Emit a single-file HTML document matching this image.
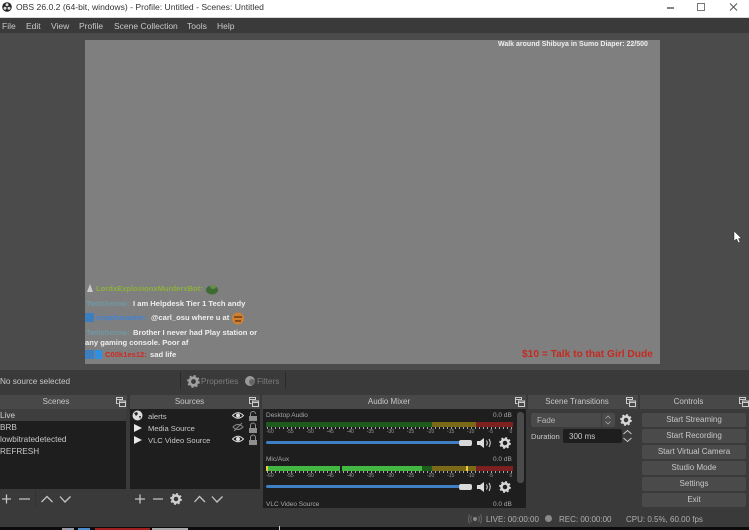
<!DOCTYPE html>
<html><head><meta charset="utf-8"><style>
html,body{margin:0;padding:0;background:#3a3a3a}
#r{position:relative;width:749px;height:530px;overflow:hidden;background:#3a3a3a;font-family:"Liberation Sans",sans-serif;font-size:8.5px;color:#d0d0d0;filter:blur(.35px)}
#r div,#r svg{position:absolute}
.t{white-space:nowrap}
.hd{background:#484848;height:14px;top:395px}
.hdt{top:397px;color:#c8c8c8;font-size:8px;text-align:center}
.lst{background:#1e1e1e;top:409px}
.b{left:642px;width:104px;height:14px;background:#4a4a4a;border-radius:2px;text-align:center;line-height:14px;font-size:8px;color:#c8c8c8;white-space:nowrap}
.g{font-weight:bold;color:#eee;font-size:7.6px;white-space:nowrap}
.db{font-size:6.5px;color:#a8a8a8;white-space:nowrap}
.sc{display:flex;justify-content:space-between;left:260px;width:261px;font-size:5px;color:#999;white-space:nowrap}
.sc span{display:block;width:20px;text-align:center}
.tk{left:267px;width:246px;height:2px;background:repeating-linear-gradient(90deg,#aaa 0 1px,transparent 1px 4px)}
</style></head><body><div id="r">

<div style="left:0;top:0;width:749px;height:18px;background:#fff"></div>
<div style="left:0;top:17px;width:749px;height:1px;background:#d8d8d8"></div>
<svg style="left:2px;top:2px" width="10" height="10" viewBox="0 0 10 10"><circle cx="5" cy="5" r="4.8" fill="#222"/><circle cx="5" cy="2.800" r="1.500" fill="#ddd"/><circle cx="3" cy="6.200" r="1.500" fill="#ddd"/><circle cx="7" cy="6.200" r="1.500" fill="#ddd"/></svg>
<div class="t" style="left:16px;top:2px;color:#333;font-size:8.6px">OBS 26.0.2 (64-bit, windows) - Profile: Untitled - Scenes: Untitled</div>
<svg style="left:665px;top:2px" width="78" height="12" viewBox="0 0 78 12"><path d="M2 6H9" stroke="#333" stroke-width="1.200"/><rect x="32.500" y="1.500" width="7" height="7" fill="none" stroke="#777"/><path d="M65 1.500L72 8.500M72 1.500L65 8.500" stroke="#555" stroke-width="1"/></svg>

<div style="left:0;top:18px;width:749px;height:15px;background:#3a3a3a"></div>
<div class="t" style="left:2px;top:21px;font-size:8.500px;color:#c8c8c8">File</div>
<div class="t" style="left:26px;top:21px;font-size:8.500px;color:#c8c8c8">Edit</div>
<div class="t" style="left:51px;top:21px;font-size:8.500px;color:#c8c8c8">View</div>
<div class="t" style="left:79px;top:21px;font-size:8.500px;color:#c8c8c8">Profile</div>
<div class="t" style="left:114px;top:21px;font-size:8.500px;color:#c8c8c8">Scene Collection</div>
<div class="t" style="left:187px;top:21px;font-size:8.500px;color:#c8c8c8">Tools</div>
<div class="t" style="left:217px;top:21px;font-size:8.500px;color:#c8c8c8">Help</div>

<div style="left:0;top:33px;width:749px;height:337px;background:#4b4b4b"></div>
<div style="left:85px;top:40px;width:575px;height:324px;background:#7f7f7f"></div>
<div class="g" style="left:498px;top:41px;font-size:7px">Walk around Shibuya in Sumo Diaper: 22/500</div>

<svg style="left:86px;top:284px" width="8" height="9" viewBox="0 0 8 9"><path d="M4 0L7 8H1Z" fill="#ccc"/></svg>
<div class="g" style="left:96px;top:284px;color:#8fb03c">LordxExplosionxMurderxBot:</div>
<svg style="left:205px;top:284px" width="14" height="11" viewBox="0 0 14 11"><ellipse cx="7" cy="6" rx="6" ry="4.500" fill="#3f6b33"/><ellipse cx="8" cy="3" rx="3" ry="2" fill="#5f8f4a"/></svg>
<div class="g" style="left:86px;top:299px;color:#6f9aa5">Twitchcrow:</div>
<div class="g" style="left:133px;top:299px">I am Helpdesk Tier 1 Tech andy</div>
<div style="left:85px;top:313px;width:9px;height:9px;background:#3c7fc0"></div>
<div class="g" style="left:96px;top:313px;color:#3f83d6">cripcharacter:</div>
<div class="g" style="left:151px;top:313px">@carl_osu where u at</div>
<svg style="left:231px;top:312px" width="14" height="13" viewBox="0 0 14 13"><circle cx="7" cy="6.500" r="6" fill="#d08030"/><path d="M3 5h8M4 9h6" stroke="#5a3010" stroke-width="1.200"/></svg>
<div class="g" style="left:86px;top:328px;color:#6f9aa5">Twitchcrow:</div>
<div class="g" style="left:133px;top:328px">Brother I never had Play station or</div>
<div class="g" style="left:85px;top:338px">any gaming console. Poor af</div>
<div style="left:85px;top:350px;width:9px;height:9px;background:#3c7fc0"></div>
<div style="left:95px;top:350px;width:7px;height:9px;background:#2f8fe0"></div>
<div class="g" style="left:105px;top:350px;color:#d02a24">C00k1es12:</div>
<div class="g" style="left:150px;top:350px">sad life</div>
<div class="t" style="left:522px;top:349px;color:#c42a20;font-weight:bold;font-size:10.200px">$10 = Talk to that Girl Dude</div>

<svg style="left:733px;top:230px" width="10" height="14" viewBox="0 0 10 14"><path d="M1 1V11L3.500 9L5.500 13L7 12L5.500 8.500H8.500Z" fill="#fff" stroke="#222" stroke-width=".5"/></svg>

<div class="t" style="left:0;top:377px;font-size:8.200px;color:#c8c8c8">No source selected</div>
<div style="left:180px;top:372px;width:1px;height:17px;background:#2a2a2a"></div>
<div style="left:285px;top:372px;width:1px;height:17px;background:#2a2a2a"></div>
<svg style="left:187px;top:375px" width="13" height="13" viewBox="0 0 24 24"><circle cx="12" cy="12" r="7" fill="none" stroke="#a0a0a0" stroke-width="5"/><circle cx="12" cy="12" r="10" fill="none" stroke="#a0a0a0" stroke-width="3.500" stroke-dasharray="3.900 3.950"/></svg>
<div class="t" style="left:201px;top:377px;color:#7d7d7d;font-size:8.200px">Properties</div>
<svg style="left:244px;top:375px" width="12" height="12" viewBox="0 0 12 12"><circle cx="6" cy="6" r="5" fill="#999"/><circle cx="8" cy="7" r="3" fill="#666"/></svg>
<div class="t" style="left:257px;top:377px;color:#7d7d7d;font-size:8.200px">Filters</div>

<!-- scenes -->
<div class="hd" style="left:0;width:127px"></div>
<div class="t hdt" style="left:0;width:112px">Scenes</div>
<svg style="left:116px;top:397px" width="10" height="10" viewBox="0 0 10 10"><path d="M.5.5h6v2h-6zM.5 2.500v4h2M3.500 4h6v5.500h-6zM3.500 5.500h6" fill="none" stroke="#ccc"/></svg>
<div class="lst" style="left:0;width:126px;height:80px"></div>
<div style="left:0;top:409px;width:126px;height:12px;background:#3e3e3e"></div>
<div class="t" style="left:0;top:411px;color:#d0d0d0;font-size:8.200px">Live</div>
<div class="t" style="left:0;top:423px;color:#c8c8c8;font-size:8.200px">BRB</div>
<div class="t" style="left:0;top:435px;color:#c8c8c8;font-size:8.200px">lowbitratedetected</div>
<div class="t" style="left:0;top:447px;color:#c8c8c8;font-size:8.200px">REFRESH</div>
<svg style="left:0;top:492px" width="75" height="14" viewBox="0 0 75 14"><path d="M2 7H11M6.500 2.500V11.500M19 7H30M41.500 10L47 4.500L52.500 10M60 4.500L65 10L70.500 4.500" fill="none" stroke="#c4c4c4" stroke-width="1.300"/></svg>
<div style="left:35px;top:490px;width:1px;height:18px;background:#333"></div>

<!-- sources -->
<div class="hd" style="left:130px;width:130px"></div>
<div class="t hdt" style="left:130px;width:119px">Sources</div>
<svg style="left:249px;top:397px" width="10" height="10" viewBox="0 0 10 10"><path d="M.5.5h6v2h-6zM.5 2.500v4h2M3.500 4h6v5.500h-6zM3.500 5.500h6" fill="none" stroke="#ccc"/></svg>
<div class="lst" style="left:130px;width:130px;height:80px"></div>
<svg style="left:132px;top:410px" width="11" height="11" viewBox="0 0 11 11"><circle cx="5.500" cy="5.500" r="5" fill="#ddd"/><path d="M2 3l3-1 1 2-2 2zM7 6l2 0-1 3z" fill="#222"/></svg>
<svg style="left:133px;top:423px" width="10" height="10" viewBox="0 0 10 10"><path d="M1 1L9 5L1 9Z" fill="#e8e8e8"/></svg>
<svg style="left:133px;top:435px" width="10" height="10" viewBox="0 0 10 10"><path d="M1 1L9 5L1 9Z" fill="#e8e8e8"/></svg>
<div class="t" style="left:148px;top:412px;font-size:7.600px;color:#c8c8c8">alerts</div>
<div class="t" style="left:148px;top:424px;font-size:7.600px;color:#c8c8c8">Media Source</div>
<div class="t" style="left:148px;top:436px;font-size:7.600px;color:#c8c8c8">VLC Video Source</div>
<svg style="left:231px;top:410px" width="30" height="36" viewBox="0 0 30 36"><path d="M1.500 5.500Q7 0 12.500 5.500Q7 11 1.500 5.500Z" fill="none" stroke="#ddd"/><circle cx="7" cy="5.500" r="2" fill="#ddd"/><path d="M2 17Q7 12 12 17Q7 22 2 17ZM3 21L11 13" fill="none" stroke="#8a8a8a"/><path d="M1.500 29Q7 23.500 12.500 29Q7 34.500 1.500 29Z" fill="none" stroke="#ddd"/><circle cx="7" cy="29" r="2" fill="#ddd"/><g fill="none" stroke="#8f8f8f"><path d="M19.500 6V4a2.500 2.500 0 0 1 5 0"/><path d="M19.500 18v-2.500a2.500 2.500 0 0 1 5 0V18"/><path d="M19.500 30v-2.500a2.500 2.500 0 0 1 5 0V30"/></g><g fill="#8f8f8f"><rect x="18" y="6" width="8" height="5"/><rect x="18" y="18" width="8" height="5"/><rect x="18" y="30" width="8" height="5"/></g></svg>
<svg style="left:134px;top:492px" width="95" height="14" viewBox="0 0 95 14"><path d="M1 7H11M6 2.500V11.500M19 7H29M60.500 10L65.500 4.500L71 10M78 4.500L83 10L88.500 4.500" fill="none" stroke="#c4c4c4" stroke-width="1.300"/></svg>
<svg style="left:170px;top:493px" width="12" height="12" viewBox="0 0 24 24"><circle cx="12" cy="12" r="7" fill="none" stroke="#d0d0d0" stroke-width="5"/><circle cx="12" cy="12" r="10" fill="none" stroke="#d0d0d0" stroke-width="3.500" stroke-dasharray="3.900 3.950"/></svg>

<!-- mixer -->
<div class="hd" style="left:262px;width:264px"></div>
<div class="t hdt" style="left:262px;width:254px">Audio Mixer</div>
<svg style="left:515px;top:397px" width="10" height="10" viewBox="0 0 10 10"><path d="M.5.5h6v2h-6zM.5 2.500v4h2M3.500 4h6v5.500h-6zM3.500 5.500h6" fill="none" stroke="#ccc"/></svg>
<div class="lst" style="left:263px;width:263px;height:99px"></div>
<div style="left:517px;top:412px;width:7px;height:71px;background:#4a4a4a;border-radius:3px"></div>
<div class="db" style="left:266px;top:412px">Desktop Audio</div>
<div class="db" style="left:493px;top:412px">0.0 dB</div>
<div style="left:266px;top:422px;width:166px;height:5px;background:#1e5c1e"></div>
<div style="left:432px;top:422px;width:44px;height:5px;background:#7a6a18"></div>
<div style="left:476px;top:422px;width:37px;height:5px;background:#7d2020"></div>
<div class="tk" style="top:427px"></div>
<div class="sc" style="top:429px"><span>-60</span><span>-55</span><span>-50</span><span>-45</span><span>-40</span><span>-35</span><span>-30</span><span>-25</span><span>-20</span><span>-15</span><span>-10</span><span>-5</span><span>0</span></div>
<div style="left:266px;top:441px;width:194px;height:3px;background:#3f7fc4;border-radius:2px"></div>
<div style="left:459px;top:439.500px;width:13px;height:6px;background:#d8d8d8;border-radius:2px"></div>
<svg style="left:476px;top:437px" width="17" height="12" viewBox="0 0 17 12"><path d="M1 4H4L8 1V11L4 8H1Z" fill="#ddd"/><path d="M10.500 3.500Q12 6 10.500 8.500M13 2Q15.500 6 13 10" fill="none" stroke="#ddd"/></svg>
<svg style="left:499px;top:437px" width="12" height="12" viewBox="0 0 24 24"><circle cx="12" cy="12" r="7" fill="none" stroke="#d8d8d8" stroke-width="5"/><circle cx="12" cy="12" r="10" fill="none" stroke="#d8d8d8" stroke-width="3.500" stroke-dasharray="3.900 3.950"/></svg>

<div class="db" style="left:266px;top:456px">Mic/Aux</div>
<div class="db" style="left:493px;top:456px">0.0 dB</div>
<div style="left:266px;top:466px;width:74px;height:5px;background:#42b842"></div>
<div style="left:342px;top:466px;width:80px;height:5px;background:#42b842"></div>
<div style="left:422px;top:466px;width:10px;height:5px;background:#1e5c1e"></div>
<div style="left:432px;top:466px;width:44px;height:5px;background:#7a6a18"></div>
<div style="left:476px;top:466px;width:37px;height:5px;background:#7d2020"></div>
<div style="left:266px;top:466px;width:2px;height:5px;background:#e8d040"></div>
<div style="left:466px;top:466px;width:2px;height:5px;background:#e8d040"></div>
<div class="tk" style="top:471px"></div>
<div class="sc" style="top:473px"><span>-60</span><span>-55</span><span>-50</span><span>-45</span><span>-40</span><span>-35</span><span>-30</span><span>-25</span><span>-20</span><span>-15</span><span>-10</span><span>-5</span><span>0</span></div>
<div style="left:266px;top:485px;width:194px;height:3px;background:#3f7fc4;border-radius:2px"></div>
<div style="left:459px;top:483.500px;width:13px;height:6px;background:#d8d8d8;border-radius:2px"></div>
<svg style="left:476px;top:481px" width="17" height="12" viewBox="0 0 17 12"><path d="M1 4H4L8 1V11L4 8H1Z" fill="#ddd"/><path d="M10.500 3.500Q12 6 10.500 8.500M13 2Q15.500 6 13 10" fill="none" stroke="#ddd"/></svg>
<svg style="left:499px;top:481px" width="12" height="12" viewBox="0 0 24 24"><circle cx="12" cy="12" r="7" fill="none" stroke="#d8d8d8" stroke-width="5"/><circle cx="12" cy="12" r="10" fill="none" stroke="#d8d8d8" stroke-width="3.500" stroke-dasharray="3.900 3.950"/></svg>
<div class="db" style="left:266px;top:501px">VLC Video Source</div>
<div class="db" style="left:493px;top:501px">0.0 dB</div>

<!-- transitions -->
<div class="hd" style="left:528px;width:110px"></div>
<div class="t hdt" style="left:528px;width:98px">Scene Transitions</div>
<svg style="left:626px;top:397px" width="10" height="10" viewBox="0 0 10 10"><path d="M.5.5h6v2h-6zM.5 2.500v4h2M3.500 4h6v5.500h-6zM3.500 5.500h6" fill="none" stroke="#ccc"/></svg>
<div style="left:531px;top:413px;width:84px;height:14px;background:#4a4a4a;border-radius:2px"></div>
<div style="left:601px;top:413px;width:1px;height:14px;background:#3a3a3a"></div>
<div class="t" style="left:537px;top:416px;font-size:8px;color:#b8b8b8">Fade</div>
<svg style="left:604px;top:415px" width="8" height="10" viewBox="0 0 8 10"><path d="M1.500 3.500L4 1L6.500 3.500M1.500 6.500L4 9L6.500 6.500" fill="none" stroke="#aaa" stroke-width=".8"/></svg>
<svg style="left:620px;top:414px" width="12" height="12" viewBox="0 0 24 24"><circle cx="12" cy="12" r="7" fill="none" stroke="#d8d8d8" stroke-width="5"/><circle cx="12" cy="12" r="10" fill="none" stroke="#d8d8d8" stroke-width="3.500" stroke-dasharray="3.900 3.950"/></svg>
<div class="t" style="left:531px;top:432px;font-size:7.600px;color:#c8c8c8">Duration</div>
<div style="left:563px;top:429px;width:59px;height:14px;background:#1e1e1e;border-radius:2px"></div>
<div class="t" style="left:569px;top:432px;font-size:8px;color:#c8c8c8">300 ms</div>
<svg style="left:622px;top:429px" width="11" height="14" viewBox="0 0 11 14"><path d="M1.500 5L5.500 1.500L9.500 5M1.500 9L5.500 12.500L9.500 9" fill="none" stroke="#c8c8c8" stroke-width="1"/></svg>

<!-- controls -->
<div class="hd" style="left:640px;width:109px"></div>
<div class="t hdt" style="left:640px;width:97px">Controls</div>
<svg style="left:739px;top:397px" width="10" height="10" viewBox="0 0 10 10"><path d="M.5.5h6v2h-6zM.5 2.500v4h2M3.500 4h6v5.500h-6zM3.500 5.500h6" fill="none" stroke="#ccc"/></svg>
<div class="b" style="top:413px">Start Streaming</div>
<div class="b" style="top:429px">Start Recording</div>
<div class="b" style="top:445px">Start Virtual Camera</div>
<div class="b" style="top:461px">Studio Mode</div>
<div class="b" style="top:477px">Settings</div>
<div class="b" style="top:493px">Exit</div>

<!-- status -->
<svg style="left:468px;top:514px" width="14" height="10" viewBox="0 0 14 10"><circle cx="7" cy="5" r="2" fill="#888"/><path d="M3.500 2Q2 5 3.500 8M1.500 .5Q-.5 5 1.500 9.500M10.500 2Q12 5 10.500 8M12.500 .5Q14.500 5 12.500 9.500" fill="none" stroke="#666"/></svg>
<div class="t" style="left:486px;top:515px;font-size:8px;color:#b0b0b0">LIVE: 00:00:00</div>
<div style="left:545px;top:515px;width:7px;height:7px;border-radius:50%;background:#8a8a8a"></div>
<div class="t" style="left:559px;top:515px;font-size:8px;color:#b0b0b0">REC: 00:00:00</div>
<div class="t" style="left:626px;top:515px;font-size:8px;color:#b0b0b0">CPU: 0.5%, 60.00 fps</div>

<!-- bottom strip -->
<div style="left:0;top:527px;width:749px;height:3px;background:#0c0c0c"></div>
<div style="left:62px;top:528px;width:12px;height:2px;background:#99a"></div>
<div style="left:78px;top:528px;width:12px;height:2px;background:#4a8ccc"></div>
<div style="left:95px;top:528px;width:55px;height:2px;background:#a02020"></div>
<div style="left:152px;top:528px;width:36px;height:2px;background:#aaa"></div>
<div style="left:279px;top:526px;width:1px;height:4px;background:#ccc"></div>
</div></body></html>
